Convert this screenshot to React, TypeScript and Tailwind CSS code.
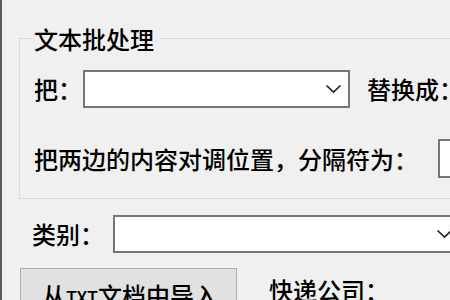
import React from "react";

function Chevron() {
  return (
    <svg width="17" height="10" viewBox="0 0 17 10" className="shrink-0">
      <polyline points="1.5,1.5 8.5,8 15.5,1.5" fill="none" stroke="#222" strokeWidth="1.7" />
    </svg>
  );
}

export default function App() {
  return (
    <div className="w-[450px] h-[300px] overflow-hidden bg-[#f0f0f0] border-l-2 border-[#5a5a5a] flex flex-col text-[24px] leading-[24px] font-medium text-black font-['Noto_Sans_CJK_SC','Microsoft_YaHei',sans-serif]">
      {/* Group box */}
      <div className="mt-[38px] ml-[17px] w-[470px] h-[161px] shrink-0 border border-[#d9d9d9]">
        <div className="-mt-[12px] ml-[12px] w-fit pl-[2px] pr-[6px] h-[24px] bg-[#f0f0f0] whitespace-nowrap">
          文本批处理
        </div>
        <div className="mt-[19px] flex items-center h-[38px] pl-[14px]">
          <div className="w-[49px] shrink-0 whitespace-nowrap">把：</div>
          <div className="w-[267px] h-[38px] shrink-0 bg-white border-2 border-[#767676] flex items-center justify-end pr-[6px]">
            <Chevron />
          </div>
          <div className="ml-[17px] whitespace-nowrap">替换成：</div>
        </div>
        <div className="mt-[31px] flex items-center h-[39px] pl-[14px]">
          <div className="w-[404px] shrink-0 whitespace-nowrap">把两边的内容对调位置，分隔符为：</div>
          <div className="w-[40px] h-[39px] shrink-0 bg-white border-2 border-[#767676]" />
        </div>
      </div>

      {/* Category row */}
      <div className="mt-[16px] flex items-center h-[38px] pl-[30px] shrink-0">
        <div className="w-[81px] shrink-0 whitespace-nowrap">类别：</div>
        <div className="w-[348px] h-[38px] shrink-0 bg-white border-2 border-[#767676] flex items-center justify-end pr-[6px]">
          <Chevron />
        </div>
      </div>

      {/* Bottom row */}
      <div className="mt-[15px] flex items-start pl-[18px] shrink-0">
        <div className="w-[217px] h-[50px] shrink-0 border border-[#adadad] bg-[#e1e1e1] pt-[14px] pl-[21px] whitespace-nowrap">
          从<span className="text-[18px]">TXT</span>文档中导入
        </div>
        <div className="mt-[10px] ml-[32px] whitespace-nowrap">快递公司：</div>
      </div>
    </div>
  );
}
